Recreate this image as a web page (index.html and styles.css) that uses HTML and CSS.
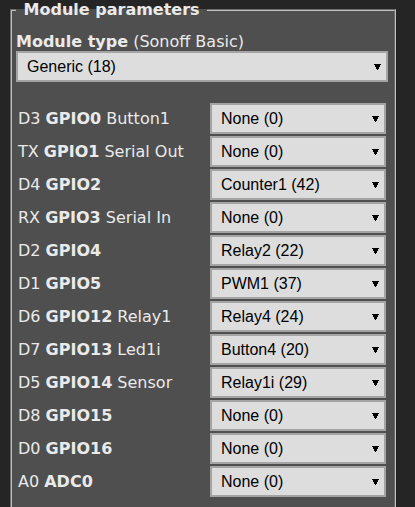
FILE: index.html
```html
<!DOCTYPE html>
<html lang="en">
<head>
<meta charset="utf-8">
<title>Module parameters</title>
<link rel="stylesheet" href="styles.css">
</head>
<body>
<div class="page">
  <fieldset class="panel">
    <legend class="panel-title"><b>&nbsp;Module parameters&nbsp;</b></legend>
    <div class="type-label"><b>Module type</b> (Sonoff Basic)</div>
    <div class="sel">
      <select><option>Generic (18)</option></select>
      <svg class="caret" width="7" height="6" viewBox="0 0 7 6"><polygon points="0,0 7,0 4,6 3,6"/></svg>
    </div>
    <div class="gpio-grid">
      <div class="gpio-label">D3 <b>GPIO0</b> Button1</div>
      <div class="sel"><select><option>None (0)</option></select><svg class="caret" width="7" height="6" viewBox="0 0 7 6"><polygon points="0,0 7,0 4,6 3,6"/></svg></div>

      <div class="gpio-label">TX <b>GPIO1</b> Serial Out</div>
      <div class="sel"><select><option>None (0)</option></select><svg class="caret" width="7" height="6" viewBox="0 0 7 6"><polygon points="0,0 7,0 4,6 3,6"/></svg></div>

      <div class="gpio-label">D4 <b>GPIO2</b></div>
      <div class="sel"><select><option>Counter1 (42)</option></select><svg class="caret" width="7" height="6" viewBox="0 0 7 6"><polygon points="0,0 7,0 4,6 3,6"/></svg></div>

      <div class="gpio-label">RX <b>GPIO3</b> Serial In</div>
      <div class="sel"><select><option>None (0)</option></select><svg class="caret" width="7" height="6" viewBox="0 0 7 6"><polygon points="0,0 7,0 4,6 3,6"/></svg></div>

      <div class="gpio-label">D2 <b>GPIO4</b></div>
      <div class="sel"><select><option>Relay2 (22)</option></select><svg class="caret" width="7" height="6" viewBox="0 0 7 6"><polygon points="0,0 7,0 4,6 3,6"/></svg></div>

      <div class="gpio-label">D1 <b>GPIO5</b></div>
      <div class="sel"><select><option>PWM1 (37)</option></select><svg class="caret" width="7" height="6" viewBox="0 0 7 6"><polygon points="0,0 7,0 4,6 3,6"/></svg></div>

      <div class="gpio-label">D6 <b>GPIO12</b> Relay1</div>
      <div class="sel"><select><option>Relay4 (24)</option></select><svg class="caret" width="7" height="6" viewBox="0 0 7 6"><polygon points="0,0 7,0 4,6 3,6"/></svg></div>

      <div class="gpio-label">D7 <b>GPIO13</b> Led1i</div>
      <div class="sel"><select><option>Button4 (20)</option></select><svg class="caret" width="7" height="6" viewBox="0 0 7 6"><polygon points="0,0 7,0 4,6 3,6"/></svg></div>

      <div class="gpio-label">D5 <b>GPIO14</b> Sensor</div>
      <div class="sel"><select><option>Relay1i (29)</option></select><svg class="caret" width="7" height="6" viewBox="0 0 7 6"><polygon points="0,0 7,0 4,6 3,6"/></svg></div>

      <div class="gpio-label">D8 <b>GPIO15</b></div>
      <div class="sel"><select><option>None (0)</option></select><svg class="caret" width="7" height="6" viewBox="0 0 7 6"><polygon points="0,0 7,0 4,6 3,6"/></svg></div>

      <div class="gpio-label">D0 <b>GPIO16</b></div>
      <div class="sel"><select><option>None (0)</option></select><svg class="caret" width="7" height="6" viewBox="0 0 7 6"><polygon points="0,0 7,0 4,6 3,6"/></svg></div>

      <div class="gpio-label">A0 <b>ADC0</b></div>
      <div class="sel"><select><option>None (0)</option></select><svg class="caret" width="7" height="6" viewBox="0 0 7 6"><polygon points="0,0 7,0 4,6 3,6"/></svg></div>
    </div>
  </fieldset>
</div>
</body>
</html>
```

FILE: styles.css
```css
html, body {
  margin: 0;
  padding: 0;
  background: #252525;
}

body {
  font-family: "DejaVu Sans", Verdana, sans-serif;
  font-size: 16px;
  color: #eaeaea;
  height: 507px;
  overflow: hidden;
}

.page {
  padding-left: 10px;
  width: 386px;
}

.panel {
  margin: 0;
  min-width: 0;
  background: #4f4f4f;
  border: 2px groove #c0c0c0;
  padding: 0 6px 40px 4px;
}

.panel-title {
  padding: 0 2px;
  font-weight: bold;
}

.type-label {
  margin-top: 13px;
}

.sel {
  position: relative;
  height: 31px;
}

.sel select {
  appearance: none;
  -webkit-appearance: none;
  display: block;
  width: 100%;
  height: 31px;
  box-sizing: border-box;
  margin: 0;
  padding: 0 0 0 9px;
  border: 2px solid #a4a4a4;
  border-radius: 0;
  background: #dddddd;
  color: #000000;
  font-family: "Liberation Sans", Arial, sans-serif;
  font-size: 16px;
}

.caret {
  position: absolute;
  right: 7px;
  top: 13px;
  fill: #000;
  shape-rendering: crispEdges;
  pointer-events: none;
}

.gpio-grid {
  margin-top: 21px;
  display: grid;
  grid-template-columns: 194px 176px;
  row-gap: 2px;
  align-items: center;
}

.gpio-label {
  padding-left: 2px;
  white-space: nowrap;
}
```
